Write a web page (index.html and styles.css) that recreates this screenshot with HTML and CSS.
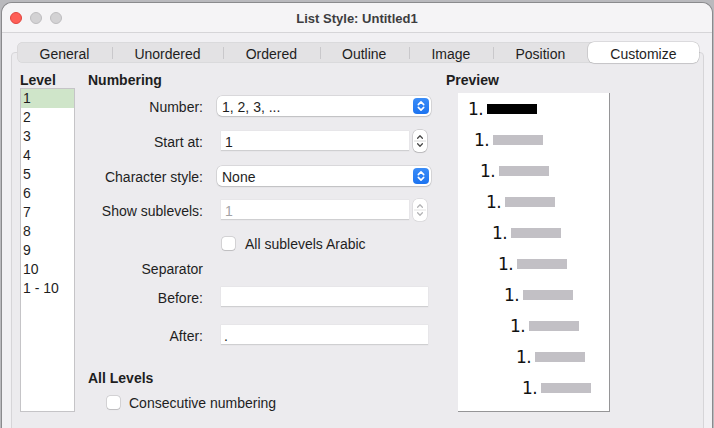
FILE: index.html
```html
<!DOCTYPE html>
<html>
<head>
<meta charset="utf-8">
<title>List Style: Untitled1</title>
<link rel="stylesheet" href="styles.css">
</head>
<body>
<div class="window">
  <div class="titlebar">
    <div class="lights"><span class="light red"></span><span class="light"></span><span class="light"></span></div>
    <div class="title">List Style: Untitled1</div>
    <div></div>
  </div>
  <div class="tabview">
    <div class="tabs">
      <div class="tab">General</div>
      <div class="tab sep">Unordered</div>
      <div class="tab sep">Ordered</div>
      <div class="tab sep">Outline</div>
      <div class="tab sep">Image</div>
      <div class="tab sep">Position</div>
      <div class="tab active">Customize</div>
    </div>
    <div class="panel">
      <div class="col-level">
        <div class="heading">Level</div>
        <ul class="levels">
          <li class="sel">1</li><li>2</li><li>3</li><li>4</li><li>5</li><li>6</li><li>7</li><li>8</li><li>9</li><li>10</li><li>1 - 10</li>
        </ul>
      </div>
      <div class="col-mid">
        <div class="heading">Numbering</div>
        <div class="row r-number">
          <div class="lbl">Number:</div>
          <div class="select"><span class="val">1, 2, 3, ...</span><span class="popbtn"><svg width="16" height="16" viewBox="0 0 16 16"><path d="M5.3 6.6 L8 3.9 L10.7 6.6 M5.3 9.4 L8 12.1 L10.7 9.4" fill="none" stroke="#fff" stroke-width="1.6" stroke-linecap="round" stroke-linejoin="round"/></svg></span></div>
        </div>
        <div class="row r-start">
          <div class="lbl">Start at:</div>
          <div class="ctl"><div class="input">1</div><span class="spin"><svg width="14" height="22" viewBox="0 0 14 22"><path d="M4.6 8.2 L7 5.8 L9.4 8.2 M4.6 13.8 L7 16.2 L9.4 13.8" fill="none" stroke="#4a4a4a" stroke-width="1.3" stroke-linecap="round" stroke-linejoin="round"/><path d="M1 11 H13" stroke="#dcdcdc" stroke-width="1"/></svg></span></div>
        </div>
        <div class="row r-char">
          <div class="lbl">Character style:</div>
          <div class="select"><span class="val">None</span><span class="popbtn"><svg width="16" height="16" viewBox="0 0 16 16"><path d="M5.3 6.6 L8 3.9 L10.7 6.6 M5.3 9.4 L8 12.1 L10.7 9.4" fill="none" stroke="#fff" stroke-width="1.6" stroke-linecap="round" stroke-linejoin="round"/></svg></span></div>
        </div>
        <div class="row r-show">
          <div class="lbl">Show sublevels:</div>
          <div class="ctl"><div class="input disabled">1</div><span class="spin dis"><svg width="14" height="22" viewBox="0 0 14 22"><path d="M4.6 8.2 L7 5.8 L9.4 8.2 M4.6 13.8 L7 16.2 L9.4 13.8" fill="none" stroke="#b4b4b6" stroke-width="1.3" stroke-linecap="round" stroke-linejoin="round"/><path d="M1 11 H13" stroke="#e4e4e4" stroke-width="1"/></svg></span></div>
        </div>
        <div class="row r-check">
          <div class="lbl"></div>
          <div class="ctl check-ctl"><span class="checkbox"></span><span class="txt">All sublevels Arabic</span></div>
        </div>
        <div class="row r-sep">
          <div class="lbl">Separator</div>
          <div></div>
        </div>
        <div class="row r-before">
          <div class="lbl">Before:</div>
          <div class="ctl"><div class="input wide"></div></div>
        </div>
        <div class="row r-after">
          <div class="lbl">After:</div>
          <div class="ctl"><div class="input wide">.</div></div>
        </div>
        <div class="heading h-all">All Levels</div>
        <div class="consec"><span class="checkbox"></span><span class="txt">Consecutive numbering</span></div>
      </div>
      <div class="col-preview">
        <div class="heading">Preview</div>
        <div class="preview">
          <div class="prow" style="padding-left:10px"><span class="num">1.</span><span class="bar first"></span></div>
          <div class="prow" style="padding-left:16px"><span class="num">1.</span><span class="bar"></span></div>
          <div class="prow" style="padding-left:22px"><span class="num">1.</span><span class="bar"></span></div>
          <div class="prow" style="padding-left:28px"><span class="num">1.</span><span class="bar"></span></div>
          <div class="prow" style="padding-left:34px"><span class="num">1.</span><span class="bar"></span></div>
          <div class="prow" style="padding-left:40px"><span class="num">1.</span><span class="bar"></span></div>
          <div class="prow" style="padding-left:46px"><span class="num">1.</span><span class="bar"></span></div>
          <div class="prow" style="padding-left:52px"><span class="num">1.</span><span class="bar"></span></div>
          <div class="prow" style="padding-left:58px"><span class="num">1.</span><span class="bar"></span></div>
          <div class="prow" style="padding-left:64px"><span class="num">1.</span><span class="bar"></span></div>
        </div>
      </div>
    </div>
  </div>
</div>
</body>
</html>
```

FILE: styles.css
```css
* { box-sizing: border-box; }
html, body { margin: 0; padding: 0; }
body {
  width: 714px;
  height: 428px;
  overflow: hidden;
  background: #b9b9bd;
  font-family: "Liberation Sans", Arial, sans-serif;
  font-size: 14px;
  color: #1e1e1e;
}
.window {
  margin: 3px 0 0 2px;
  width: 710px;
  height: 440px;
  background: #f1f0f3;
  border-radius: 10px 10px 0 0;
  overflow: hidden;
  box-shadow: 0 0 0 1px rgba(0,0,0,0.25);
}
.titlebar {
  height: 30px;
  background: #f5f4f6;
  border-bottom: 1px solid #d6d5d8;
  display: grid;
  grid-template-columns: 1fr auto 1fr;
  align-items: center;
}
.lights { display: flex; gap: 8px; padding-left: 8px; }
.light {
  width: 12px; height: 12px; border-radius: 50%;
  background: #d3d2d4;
  border: 0.5px solid #bdbcbf;
}
.light.red { background: #fe5f57; border-color: #e0443e; }
.title {
  font-weight: bold;
  font-size: 13px;
  color: #3d3d3f;
  padding-top: 2px;
}
.tabview {
  margin: 9px 0 0 9px;
  width: 693px;
}
.tabs {
  position: relative;
  z-index: 1;
  margin: 0 5px 0 6px;
  height: 21px;
  display: flex;
  align-items: flex-start;
  background: #e3e2e4;
  border-radius: 6px;
  box-shadow: inset 0 0 0 0.5px #d2d1d3;
}
.tab {
  flex: 1 1 auto;
  height: 21px;
  line-height: 24px;
  text-align: center;
  padding: 0 21px;
  position: relative;
}
.tab.sep::before {
  content: "";
  position: absolute;
  left: 0;
  top: 5px;
  height: 12px;
  border-left: 1px solid #c9c8cb;
}
.tab.active {
  background: #ffffff;
  border-radius: 6px;
  box-shadow: 0 0 0 0.5px rgba(0,0,0,0.18), 0 1px 1px rgba(0,0,0,0.08);
}
.panel {
  margin-top: -11px;
  height: 400px;
  background: #ecebee;
  border: 1px solid #d6d5d8;
  border-radius: 4px;
  padding: 18px 0 0 8px;
  display: flex;
  align-items: flex-start;
}
.heading {
  font-weight: bold;
  height: 17px;
  line-height: 19px;
}
.col-level { width: 55px; }
.levels {
  list-style: none;
  margin: 0;
  padding: 0;
  height: 324px;
  background: #fff;
  border: 1px solid #c5c4c7;
}
.levels li {
  height: 19px;
  line-height: 19px;
  padding-left: 2px;
}
.levels li.sel { background: #cfe5c9; }
.col-mid { width: 343px; margin-left: 13px; }
.row {
  display: grid;
  grid-template-columns: 115px 214px;
  column-gap: 14px;
  align-items: center;
}
.lbl { text-align: right; padding-top: 2px; }
.r-number { height: 20px; margin-top: 8px; }
.r-start { height: 22px; margin-top: 14px; }
.r-char { height: 20px; margin-top: 14px; }
.r-show { height: 22px; margin-top: 13px; }
.r-check { height: 16px; margin-top: 13px; }
.r-sep { height: 16px; margin-top: 9px; }
.r-before { height: 20px; margin-top: 12px; }
.r-after { height: 20px; margin-top: 18px; }
.h-all { margin-top: 24px; }
.select {
  height: 20px;
  background: #fff;
  border-radius: 5px;
  box-shadow: 0 0 0 0.5px rgba(0,0,0,0.16), 0 1px 1.5px rgba(0,0,0,0.12);
  display: flex;
  align-items: center;
  justify-content: space-between;
  padding: 0 2px 0 5px;
}
.val { padding-top: 2px; }
.popbtn {
  width: 16px;
  height: 16px;
  border-radius: 4px;
  background: linear-gradient(#3a8cf8, #1c73f0);
  display: flex;
}
.ctl { display: flex; align-items: center; }
.input {
  margin-left: 4px;
  width: 188px;
  height: 20px;
  line-height: 22px;
  background: #fff;
  padding-left: 4px;
  border-bottom: 1px solid #cfcfd1;
  box-shadow: 0 0 0 0.5px #e2e2e4;
}
.input.wide { width: 207px; padding-left: 3px; }
.input.disabled { color: #a3a3a5; }
.spin {
  margin-left: 4px;
  width: 14px;
  height: 22px;
  background: #fff;
  border-radius: 5px;
  box-shadow: 0 0 0 0.5px rgba(0,0,0,0.22), 0 1px 1px rgba(0,0,0,0.1);
  display: flex;
}
.spin.dis { box-shadow: 0 0 0 0.5px rgba(0,0,0,0.12); }
.check-ctl { padding-left: 5px; gap: 10px; }
.txt { padding-top: 2px; }
.checkbox {
  width: 13px;
  height: 13px;
  background: #fff;
  border-radius: 3px;
  box-shadow: 0 0 0 0.5px rgba(0,0,0,0.2), 0 0.5px 1px rgba(0,0,0,0.1);
  flex: none;
}
.consec {
  margin-top: 8px;
  height: 16px;
  display: flex;
  align-items: center;
  gap: 9px;
  padding-left: 19px;
}
.col-preview { margin-left: 15px; }
.preview {
  margin: 5px 0 0 12px;
  width: 152px;
  height: 319px;
  background: #fff;
  border-right: 1px solid #959597;
  border-bottom: 1px solid #959597;
}
.prow {
  height: 31px;
  display: flex;
  align-items: center;
}
.num {
  font-family: "DejaVu Sans", sans-serif;
  font-size: 17px;
  color: #111;
  width: 19px;
  letter-spacing: -0.5px;
}
.bar {
  width: 50px;
  height: 10px;
  background: #c2c0c5;
}
.bar.first { background: #000; }
```
